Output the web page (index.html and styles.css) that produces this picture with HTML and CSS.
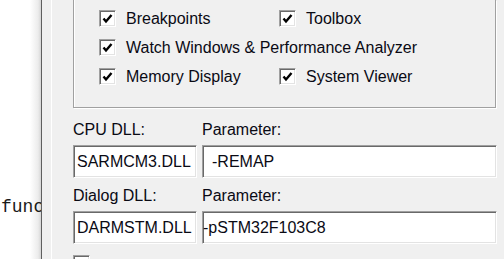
FILE: index.html
```html
<!DOCTYPE html>
<html lang="en">
<head>
    <meta charset="UTF-8">
    <meta name="viewport" content="width=device-width, initial-scale=1.0">
    <title>Options for Target - Debug</title>
    <link rel="stylesheet" href="styles.css">
</head>
<body>

<div class="screen">
    <!-- editor behind the dialog -->
    <div class="editor">
        <pre class="code">func</pre>
    </div>

    <!-- options dialog, debug tab -->
    <div class="dialog">
        <div class="tab-page">

            <fieldset class="group">
                <div class="check-grid">
                    <label class="check">
                        <span class="box checked"><svg viewBox="0 0 11 11"><polyline points="1.5,5.5 4,8.5 9.5,2"/></svg></span>
                        Breakpoints
                    </label>
                    <label class="check">
                        <span class="box checked"><svg viewBox="0 0 11 11"><polyline points="1.5,5.5 4,8.5 9.5,2"/></svg></span>
                        Toolbox
                    </label>
                    <label class="check wide">
                        <span class="box checked"><svg viewBox="0 0 11 11"><polyline points="1.5,5.5 4,8.5 9.5,2"/></svg></span>
                        Watch Windows &amp; Performance Analyzer
                    </label>
                    <label class="check">
                        <span class="box checked"><svg viewBox="0 0 11 11"><polyline points="1.5,5.5 4,8.5 9.5,2"/></svg></span>
                        Memory Display
                    </label>
                    <label class="check">
                        <span class="box checked"><svg viewBox="0 0 11 11"><polyline points="1.5,5.5 4,8.5 9.5,2"/></svg></span>
                        System Viewer
                    </label>
                </div>
            </fieldset>

            <div class="dll-grid">
                <div class="field-label">CPU DLL:</div>
                <div class="field-label">Parameter:</div>
                <div class="field">SARMCM3.DLL</div>
                <div class="field param">-REMAP</div>

                <div class="field-label">Dialog DLL:</div>
                <div class="field-label">Parameter:</div>
                <div class="field">DARMSTM.DLL</div>
                <div class="field param scrolled">-pSTM32F103C8</div>
            </div>

            <div class="bottom-row">
                <span class="box"></span>
            </div>

        </div>
    </div>
</div>

</body>
</html>
```

FILE: styles.css
```css
/* Windows classic dialog look */
body {
    margin: 0;
    font-family: 'Liberation Sans', Arial, sans-serif;
    font-size: 16px;
    color: #0a0a14;
    background-color: #f0f0f0;
}
.screen {
    display: flex;
    height: 259px;
    overflow: hidden;
}

/* code editor peeking out on the left */
.editor {
    width: 41px;
    flex-shrink: 0;
    background: linear-gradient(to right, #ffffff 30px, #ececec 38px, #d6d6d6 41px);
    overflow: hidden;
}
.code {
    margin: 0;
    padding: 197px 0 0 1px;
    font-family: 'Liberation Mono', 'Courier New', monospace;
    font-size: 18px;
    line-height: 20px;
    color: #1a1a1a;
}

.dialog {
    flex: 1;
    border-left: 1px solid #5f5f5f;
    padding-left: 9px;
    background-color: #f0f0f0;
}
.tab-page {
    height: 100%;
    border-left: 1px solid #ffffff;
    padding: 0 7px 0 21px;
}

/* group box, top edge is out of view */
.group {
    margin: 0 1px 0 0;
    padding: 4px 0 16px 25px;
    border: 1px solid #a0a0a0;
    border-top: none;
    box-shadow: inset 1px 0 0 #ffffff, 1px 1px 0 #ffffff;
}
.check-grid {
    display: grid;
    grid-template-columns: 180px auto;
    grid-auto-rows: 29px;
}
.check {
    display: flex;
    align-items: center;
    gap: 10px;
    white-space: nowrap;
}
.check.wide {
    grid-column: 1 / 3;
}
.box {
    display: inline-flex;
    align-items: center;
    justify-content: center;
    width: 17px;
    height: 17px;
    box-sizing: border-box;
    flex-shrink: 0;
    background-color: #ffffff;
    border: 1px solid #a0a0a0;
    border-right-color: #ffffff;
    border-bottom-color: #ffffff;
    box-shadow: inset 1px 1px 0 #696969, inset -1px -1px 0 #e3e3e3;
}
.box svg {
    width: 11px;
    height: 11px;
    fill: none;
    stroke: #000000;
    stroke-width: 2.4;
}

/* DLL rows */
.dll-grid {
    display: grid;
    grid-template-columns: 124px 1fr;
    column-gap: 5px;
    margin-top: 13px;
}
.field-label {
    line-height: 18px;
    margin-bottom: 6px;
    white-space: nowrap;
}
.field {
    height: 33px;
    box-sizing: border-box;
    margin-bottom: 9px;
    padding-left: 3px;
    line-height: 31px;
    white-space: nowrap;
    overflow: hidden;
    background-color: #ffffff;
    border: 1px solid #a0a0a0;
    border-right-color: #ffffff;
    border-bottom-color: #ffffff;
    box-shadow: inset 1px 1px 0 #696969, inset -1px -1px 0 #e3e3e3;
}
.field.param {
    padding-left: 9px;
}
.field.param.scrolled {
    padding-left: 0;
}

.bottom-row {
    margin-top: 2px;
}
```
